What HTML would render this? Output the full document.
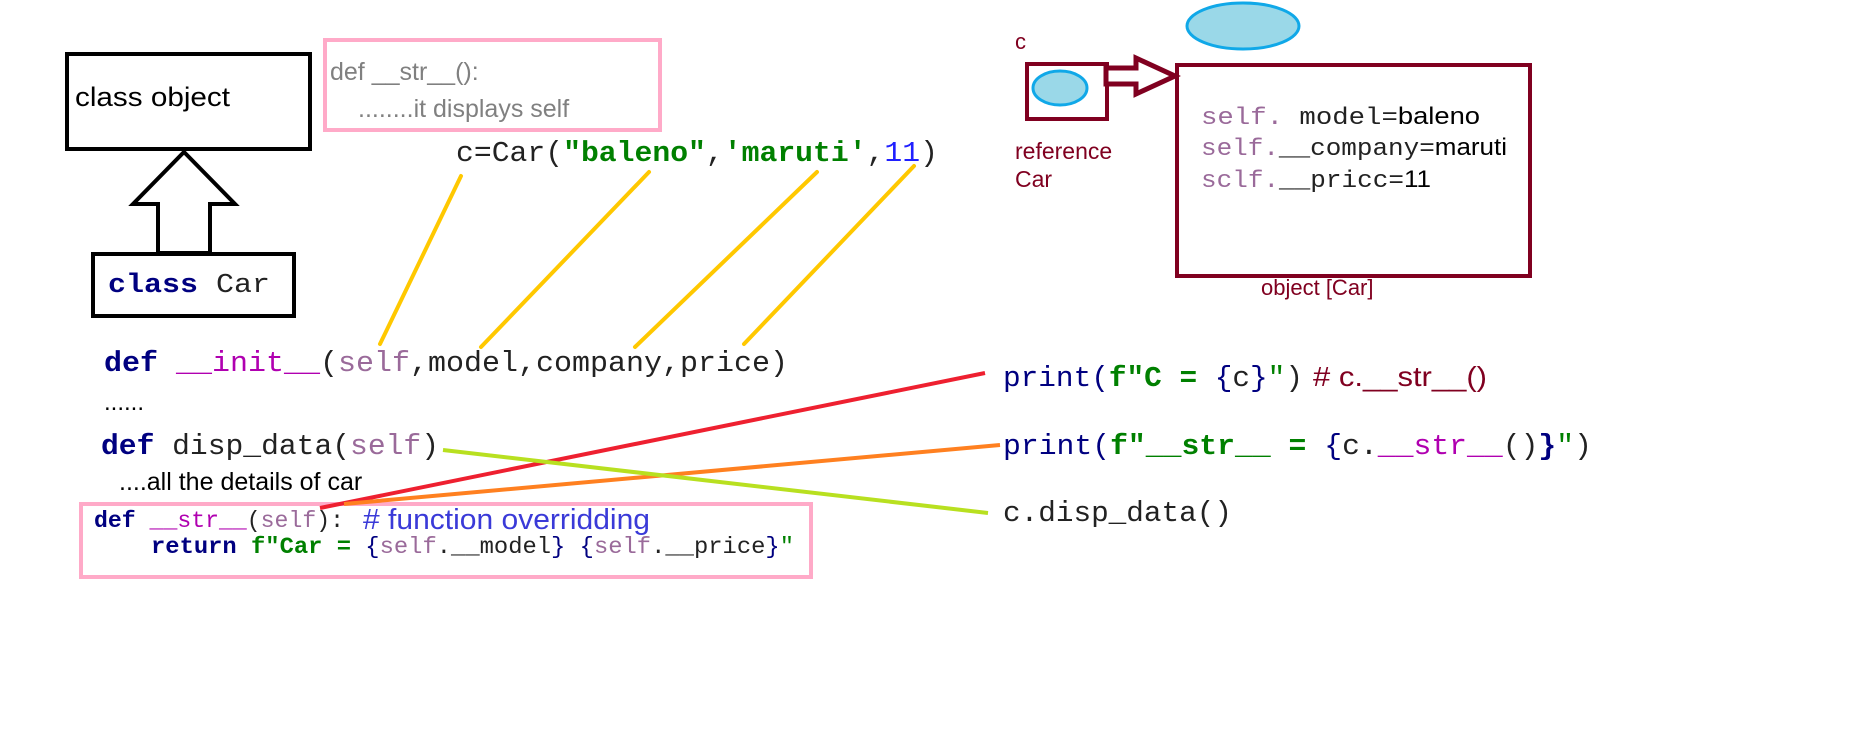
<!DOCTYPE html>
<html><head><meta charset="utf-8"><style>
html,body{margin:0;padding:0;background:#fff;width:1852px;height:743px;overflow:hidden}
svg{display:block}
.m{font-family:"Liberation Mono",monospace}
.s{font-family:"Liberation Sans",sans-serif}
.n{font-family:"Liberation Sans Narrow","Liberation Sans",sans-serif}
</style></head><body>
<svg width="1852" height="743" viewBox="0 0 1852 743" xmlns="http://www.w3.org/2000/svg">
<rect x="67" y="54" width="243" height="95" fill="none" stroke="#000" stroke-width="4"/>
<text x="75" y="106" class="n" font-size="27" fill="#000" textLength="155" lengthAdjust="spacingAndGlyphs">class object</text>
<polygon points="184,152 235,204 210,204 210,253 158,253 158,204 133,204" fill="#fff" stroke="#000" stroke-width="4" stroke-linejoin="miter"/>
<rect x="93" y="254" width="201" height="62" fill="none" stroke="#000" stroke-width="4"/>
<text x="108" y="292" class="m" font-size="27" textLength="162" lengthAdjust="spacingAndGlyphs"><tspan fill="#000080" font-weight="bold">class</tspan><tspan fill="#222"> Car</tspan></text>
<rect x="325" y="40" width="335" height="90" fill="none" stroke="#ffaac8" stroke-width="4"/>
<text x="330" y="80" class="n" font-size="25" fill="#808080">def __str__():</text>
<text x="358" y="117" class="n" font-size="25" fill="#808080">........it displays self</text>
<text x="456" y="161" class="m" font-size="29" textLength="482" lengthAdjust="spacingAndGlyphs"><tspan fill="#222">c=Car(</tspan><tspan fill="#008000" font-weight="bold">"baleno"</tspan><tspan fill="#222">,</tspan><tspan fill="#008000" font-weight="bold">'maruti'</tspan><tspan fill="#222">,</tspan><tspan fill="#2020ff">11</tspan><tspan fill="#222">)</tspan></text>
<g stroke="#ffc800" stroke-width="4" stroke-linecap="round">
<line x1="461" y1="176" x2="380" y2="344"/>
<line x1="649" y1="172" x2="481" y2="347"/>
<line x1="817" y1="172" x2="635" y2="347"/>
<line x1="914" y1="166" x2="744" y2="344"/>
</g>
<text x="104" y="371" class="m" font-size="29" textLength="684" lengthAdjust="spacingAndGlyphs"><tspan fill="#000080" font-weight="bold">def</tspan><tspan fill="#222"> </tspan><tspan fill="#b000b0">__init__</tspan><tspan fill="#222">(</tspan><tspan fill="#9a6a9a">self</tspan><tspan fill="#222">,model,company,price)</tspan></text>
<text x="104" y="410" class="n" font-size="24" fill="#000">......</text>
<text x="101" y="454" class="m" font-size="29" textLength="338" lengthAdjust="spacingAndGlyphs"><tspan fill="#000080" font-weight="bold">def</tspan><tspan fill="#222"> disp_data(</tspan><tspan fill="#9a6a9a">self</tspan><tspan fill="#222">)</tspan></text>
<text x="119" y="490" class="n" font-size="25" fill="#000">....all the details of car</text>
<rect x="81" y="504" width="730" height="73" fill="none" stroke="#ffaac8" stroke-width="4"/>
<text x="94" y="527" class="m" font-size="23" textLength="250" lengthAdjust="spacingAndGlyphs"><tspan fill="#000080" font-weight="bold">def</tspan><tspan fill="#222"> </tspan><tspan fill="#b000b0">__str__</tspan><tspan fill="#222">(</tspan><tspan fill="#9a6a9a">self</tspan><tspan fill="#222">):</tspan></text>
<text x="363" y="529" class="n" font-size="29" fill="#3a3ad8" textLength="287" lengthAdjust="spacingAndGlyphs">#  function overridding</text>
<text x="151" y="553" class="m" font-size="23" textLength="643" lengthAdjust="spacingAndGlyphs"><tspan fill="#000080" font-weight="bold">return</tspan><tspan>  </tspan><tspan fill="#008000" font-weight="bold">f"Car = </tspan><tspan fill="#000080">{</tspan><tspan fill="#9a6a9a">self</tspan><tspan fill="#222">.__model</tspan><tspan fill="#000080">}</tspan><tspan> </tspan><tspan fill="#000080">{</tspan><tspan fill="#9a6a9a">self</tspan><tspan fill="#222">.__price</tspan><tspan fill="#000080">}</tspan><tspan fill="#008000">"</tspan></text>
<line x1="320" y1="508" x2="985" y2="373" stroke="#ee2030" stroke-width="4"/>
<line x1="344" y1="504" x2="1000" y2="445" stroke="#ff8020" stroke-width="4"/>
<line x1="443" y1="450" x2="988" y2="513" stroke="#b8e020" stroke-width="4"/>
<text x="1003" y="386" class="m" font-size="29" textLength="300" lengthAdjust="spacingAndGlyphs"><tspan fill="#000080">print(</tspan><tspan fill="#008000" font-weight="bold">f"C = </tspan><tspan fill="#000080">{</tspan><tspan fill="#222">c</tspan><tspan fill="#000080">}</tspan><tspan fill="#008000">"</tspan><tspan fill="#222">)</tspan></text>
<text x="1313" y="386" class="n" font-size="28" fill="#800020" textLength="174" lengthAdjust="spacingAndGlyphs">#  c.__str__()</text>
<text x="1003" y="454" class="m" font-size="29" textLength="589" lengthAdjust="spacingAndGlyphs"><tspan fill="#000080">print(</tspan><tspan fill="#008000" font-weight="bold">f"__str__ = </tspan><tspan fill="#000080">{</tspan><tspan fill="#222">c.</tspan><tspan fill="#b000b0">__str__</tspan><tspan fill="#222">()</tspan><tspan fill="#000080" font-weight="bold">}</tspan><tspan fill="#008000">"</tspan><tspan fill="#222">)</tspan></text>
<text x="1003" y="521" class="m" font-size="29" fill="#222" textLength="229" lengthAdjust="spacingAndGlyphs">c.disp_data()</text>
<text x="1015" y="49" class="n" font-size="22" fill="#800020">c</text>
<rect x="1027" y="64" width="80" height="55" fill="none" stroke="#800020" stroke-width="4"/>
<ellipse cx="1060" cy="88" rx="27" ry="17" fill="#9ad8e8" stroke="#10a8e8" stroke-width="3"/>
<ellipse cx="1243" cy="26" rx="56" ry="23" fill="#9ad8e8" stroke="#10a8e8" stroke-width="3"/>
<polygon points="1106,68 1136,68 1136,58 1175,76 1136,94 1136,84 1106,84" fill="#fff" stroke="#800020" stroke-width="5"/>
<rect x="1177" y="65" width="353" height="211" fill="none" stroke="#800020" stroke-width="4"/>
<text x="1015" y="159" class="n" font-size="23" fill="#800020">reference</text>
<text x="1015" y="187" class="n" font-size="23" fill="#800020">Car</text>
<text x="1201" y="124" font-size="24" textLength="279" lengthAdjust="spacingAndGlyphs"><tspan class="m" fill="#9a6a9a">self.</tspan><tspan class="m" fill="#222">  model=</tspan><tspan class="n" fill="#000">baleno</tspan></text>
<text x="1201" y="155" font-size="24" textLength="306" lengthAdjust="spacingAndGlyphs"><tspan class="m" fill="#9a6a9a">self.</tspan><tspan class="m" fill="#222">__company=</tspan><tspan class="n" fill="#000">maruti</tspan></text>
<text x="1201" y="187" font-size="24" textLength="230" lengthAdjust="spacingAndGlyphs"><tspan class="m" fill="#9a6a9a">sclf.</tspan><tspan class="m" fill="#222">__pricc=</tspan><tspan class="n" fill="#000">11</tspan></text>
<text x="1261" y="295" class="n" font-size="22" fill="#800020">object [Car]</text>
</svg>
</body></html>
